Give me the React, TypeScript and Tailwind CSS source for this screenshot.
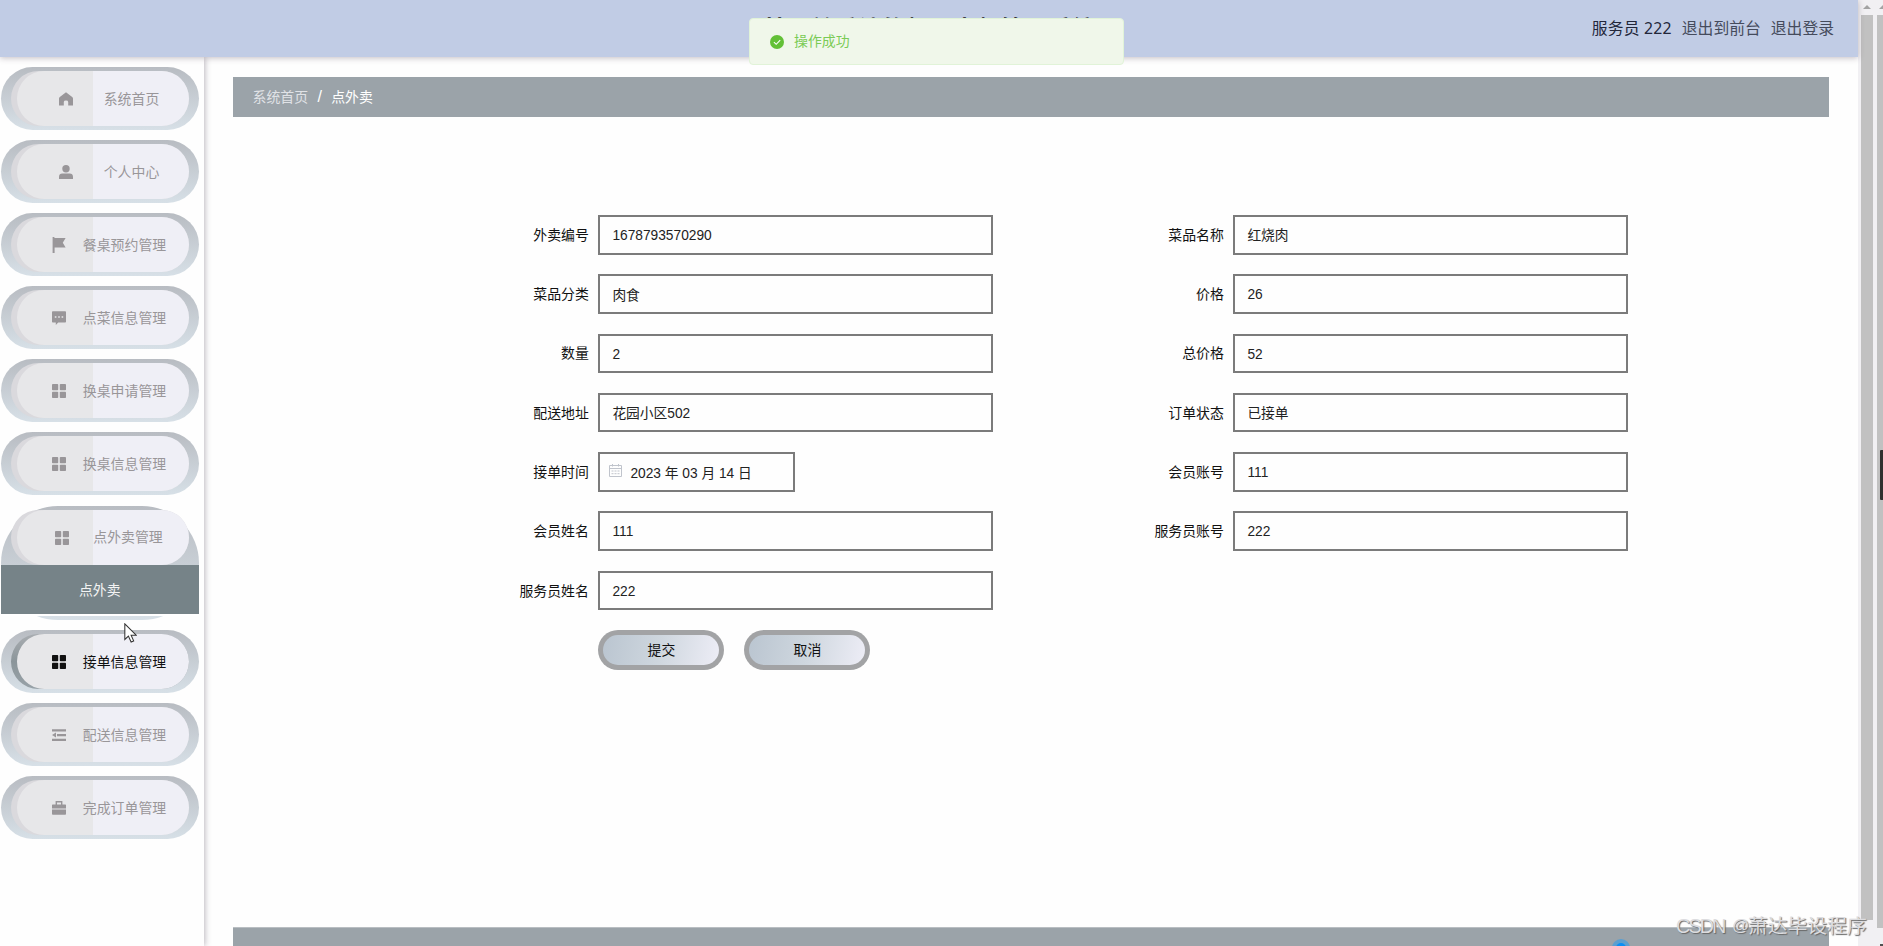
import React from 'react';
import type { ReactNode } from 'react';

interface MenuItem {
  label: string;
  icon: ReactNode;
  gap: string;
  active?: boolean;
  child?: string;
}

interface Field {
  label: string;
  value: string;
  date?: boolean;
}

const Icon: React.FC<{ children: ReactNode }> = ({ children }) => (
  <svg viewBox="0 0 14 14" className="w-[14px] h-[14px] shrink-0" fill="currentColor">{children}</svg>
);

const GridIcon = () => (
  <Icon>
    <rect x="0" y="0" width="6.2" height="6.2" rx="0.8" />
    <rect x="7.8" y="0" width="6.2" height="6.2" rx="0.8" />
    <rect x="0" y="7.8" width="6.2" height="6.2" rx="0.8" />
    <rect x="7.8" y="7.8" width="6.2" height="6.2" rx="0.8" />
  </Icon>
);

const HomeIcon = () => (
  <Icon><path d="M7 0.3 L13.2 5 Q14 5.6 14 6.6 V13.6 H9.2 V10 Q9.2 8.6 7 8.6 Q4.8 8.6 4.8 10 V13.6 H0 V6.6 Q0 5.6 0.8 5 Z" /></Icon>
);

const UserIcon = () => (
  <Icon>
    <circle cx="7" cy="3.7" r="3.7" />
    <path d="M0 14 V12 Q0 8.6 3.4 8.6 H10.6 Q14 8.6 14 12 V14 Z" />
  </Icon>
);

const FlagIcon = () => (
  <svg viewBox="0 0 14 16" className="w-[14px] h-[16px] shrink-0" fill="currentColor">
    <path d="M0.6 0 H2.4 V1 H13.6 L10.8 5.7 L13.6 10.4 H2.6 V16 H0.6 Z" />
  </svg>
);

const ChatIcon = () => (
  <Icon>
    <path
      fillRule="evenodd"
      d="M0.8 0.2 H13.2 Q14 0.2 14 1 V10.8 Q14 11.6 13.2 11.6 H6.2 L3.8 14 V11.6 H0.8 Q0 11.6 0 10.8 V1 Q0 0.2 0.8 0.2 Z M2.8 5.2 V6.8 H4.4 V5.2 Z M6.2 5.2 V6.8 H7.8 V5.2 Z M9.6 5.2 V6.8 H11.2 V5.2 Z"
    />
  </Icon>
);

const FoldIcon = () => (
  <Icon><path d="M0 1.2 H14 V3.4 H0 Z M5 6 H14 V8.2 H5 Z M0 10.8 H14 V13 H0 Z M0 7.1 L4 4.6 V9.6 Z" /></Icon>
);

const CaseIcon = () => (
  <Icon>
    <path d="M3.6 3.6 V0 H10.4 V3.6 H13.4 Q14 3.6 14 4.2 V7.4 H0 V4.2 Q0 3.6 0.6 3.6 Z M5 1.4 V3.6 H9 V1.4 Z" fillRule="evenodd" />
    <path d="M0 8.6 H14 V13 Q14 13.8 13.2 13.8 H0.8 Q0 13.8 0 13 Z" />
  </Icon>
);

const menu: MenuItem[] = [
  { label: '系统首页', icon: <HomeIcon />, gap: 'gap-[31px]' },
  { label: '个人中心', icon: <UserIcon />, gap: 'gap-[31px]' },
  { label: '餐桌预约管理', icon: <FlagIcon />, gap: 'gap-[17px]' },
  { label: '点菜信息管理', icon: <ChatIcon />, gap: 'gap-[17px]' },
  { label: '换桌申请管理', icon: <GridIcon />, gap: 'gap-[17px]' },
  { label: '换桌信息管理', icon: <GridIcon />, gap: 'gap-[17px]' },
  { label: '点外卖管理', icon: <GridIcon />, gap: 'gap-[24px]', child: '点外卖' },
  { label: '接单信息管理', icon: <GridIcon />, gap: 'gap-[17px]', active: true },
  { label: '配送信息管理', icon: <FoldIcon />, gap: 'gap-[17px]' },
  { label: '完成订单管理', icon: <CaseIcon />, gap: 'gap-[17px]' },
];

const leftFields: Field[] = [
  { label: '外卖编号', value: '1678793570290' },
  { label: '菜品分类', value: '肉食' },
  { label: '数量', value: '2' },
  { label: '配送地址', value: '花园小区502' },
  { label: '接单时间', value: '2023 年 03 月 14 日', date: true },
  { label: '会员姓名', value: '111' },
  { label: '服务员姓名', value: '222' },
];

const rightFields: Field[] = [
  { label: '菜品名称', value: '红烧肉' },
  { label: '价格', value: '26' },
  { label: '总价格', value: '52' },
  { label: '订单状态', value: '已接单' },
  { label: '会员账号', value: '111' },
  { label: '服务员账号', value: '222' },
];

const SidebarItem: React.FC<{ item: MenuItem }> = ({ item }) => (
  <li
    className={`w-[197.5px] mb-[10.1px] pt-[4px] bg-linear-to-b from-[#b8bcc2] to-[#d7e0e7] ${
      item.child ? 'h-[114.5px] rounded-[57px]' : 'h-[63px] rounded-[32px]'
    }`}
  >
    <div
      className={`ml-[10px] w-[177.5px] h-[55px] pl-[6px] rounded-[28px] ${
        item.active ? 'bg-linear-to-b from-[#a9adb1] via-[#8b959a] to-[#98a2a8]' : 'bg-[#dad9dd]'
      }`}
    >
      <div
        className={`h-full pl-[12.5px] pt-px rounded-[28px] flex items-center justify-center text-[13.9px] whitespace-nowrap bg-[linear-gradient(90deg,#e7e7e9_76px,#efeff6_76px)] ${item.gap} ${
          item.active ? 'text-[#111]' : 'text-[#999699]'
        }`}
      >
        {item.icon}
        <span>{item.label}</span>
      </div>
    </div>
    {item.child && (
      <div className="bg-white h-[51.5px] w-full">
        <div className="h-[49.5px] pt-[2px] bg-[#768388] text-[#f3f3f3] text-[13.9px] flex items-center justify-center">{item.child}</div>
      </div>
    )}
  </li>
);

const FormRow: React.FC<{ field: Field }> = ({ field }) => (
  <div className="flex items-center h-[39.5px] mb-[19.8px] text-[13.9px] text-[#111]">
    <label className="w-[100px] pr-[9.5px] pt-px text-right">{field.label}</label>
    <div
      className={`h-full border-2 border-[#7b7b7b] flex items-center text-[13.74px] text-[#222] ${
        field.date ? 'w-[197px] pl-[9px] gap-[8px]' : 'w-[395px] pl-[12px]'
      }`}
    >
      {field.date && (
        <svg viewBox="0 0 13 13" className="w-[13px] h-[13px] -mt-[3px]" fill="none" stroke="#c0c4cc" strokeWidth="1">
          <path d="M0.5 1.5 H12.5 V12.5 H0.5 Z M0.5 4.5 H12.5 M3.5 0 V2.5 M9.5 0 V2.5" />
          <path d="M2.5 7 H10.5 M2.5 9.7 H10.5" strokeDasharray="2 1" />
        </svg>
      )}
      <span className={/[^\d]/.test(field.value) ? 'pt-[4px]' : 'pt-[3px]'}>{field.value}</span>
    </div>
  </div>
);

const FormButton: React.FC<{ text: string }> = ({ text }) => (
  <button className="w-[126px] h-[39.5px] rounded-[20px] bg-[#a2a3a5] p-[5px] text-[13.9px] text-[#111]">
    <span className="flex h-full items-center justify-center pt-px rounded-[16px] bg-linear-[100deg] from-[#bac5d0] via-[#cfd7df] to-[#ededf6]">
      {text}
    </span>
  </button>
);

const App: React.FC = () => {
  return (
    <div className="relative flex w-[1883px] h-[946px] overflow-hidden bg-[#fefefe] font-['Liberation_Sans','Noto_Sans_CJK_SC',sans-serif]">
      <div className="w-[1858px] h-full flex flex-col">
        <header className="relative z-10 h-[57px] shrink-0 bg-[#c1cce5] shadow-[0_1px_6px_rgba(60,40,60,0.3)] flex items-center">
          <h1 className="flex-1 pl-[466px] pt-[2px] text-center text-[23.8px] font-bold text-[#222] whitespace-nowrap">
            基于前后端的餐厅点餐管理系统
          </h1>
          <div className="w-[466px] flex justify-end gap-[10px] pr-[24px] text-[15.8px] text-[#454b5c]">
            <span className="text-[#22263a] font-['Noto_Sans','Noto_Sans_CJK_SC',sans-serif] tracking-[0.2px]">服务员 222</span>
            <span>退出到前台</span>
            <span>退出登录</span>
          </div>
        </header>

        <div className="flex flex-1 min-h-0">
          <aside className="w-[203.5px] shrink-0 pt-[10px] pl-px shadow-[1px_0_6px_rgba(60,50,70,0.35)]">
            <ul>
              {menu.map((item) => (
                <SidebarItem key={item.label} item={item} />
              ))}
            </ul>
          </aside>

          <main className="flex-1 ml-[29.5px] mr-[29px] pt-[20px] flex flex-col">
            <nav className="h-[39.5px] pl-[19.5px] pt-px flex items-center gap-[9.3px] bg-[#9ba3a9] text-[13.9px] text-white">
              <span className="text-[#e0e2e6]">系统首页</span>
              <span className="text-[16px]">/</span>
              <span>点外卖</span>
            </nav>

            <form className="flex-1 pt-[98.5px] pl-[265.4px] flex gap-[140px]" onSubmit={(e) => e.preventDefault()}>
              <div>
                {leftFields.map((f) => (
                  <FormRow key={f.label} field={f} />
                ))}
                <div className="flex gap-[20px] pl-[100px]">
                  <FormButton text="提交" />
                  <FormButton text="取消" />
                </div>
              </div>
              <div>
                {rightFields.map((f) => (
                  <FormRow key={f.label} field={f} />
                ))}
              </div>
            </form>

            <footer className="h-[19.5px] shrink-0 bg-[#9ba3a9] border-t border-[#b9bec2]" />
          </main>
        </div>
      </div>

      {/* page scrollbar and window scrollbar */}
      <div className="w-[17px] h-full bg-[#f1f0f3] pl-[3px] pr-[2px] flex flex-col">
        <div className="h-[15px] pt-[5px] flex justify-center">
          <svg viewBox="0 0 8 4" className="w-[8px] h-[4px]" fill="#a3a3a3"><path d="M4 0 L8 4 H0 Z" /></svg>
        </div>
        <div className="h-[905px] bg-[#c1c1c1]" />
      </div>
      <div className="w-[8px] h-full bg-[#f1f0f3] pl-[2px] flex flex-col">
        <div className="h-[15px] pt-[5px] pl-[2px]">
          <svg viewBox="0 0 8 4" className="w-[8px] h-[4px]" fill="#a3a3a3"><path d="M4 0 L8 4 H0 Z" /></svg>
        </div>
        <div className="h-[913px] bg-[#c1c1c1]" />
        <div className="mt-[16px] ml-[3px] w-[3px] h-[2px] bg-[#505050]" />
      </div>
      <div className="absolute right-0 top-[450px] w-[3px] h-[50px] rounded-l-[1px] bg-[#30312f]" />

      {/* success message */}
      <div className="absolute z-20 left-[748.5px] top-[18px] w-[375.5px] h-[47px] pl-[20px] flex items-center gap-[10.5px] rounded-[4px] border border-[#e1f3d8] bg-[#f0f7ea] text-[13.9px] text-[#7acb55]">
        <svg viewBox="0 0 14 14" className="w-[14px] h-[14px]">
          <circle cx="7" cy="7" r="7" fill="#62c036" />
          <path d="M3.9 7.2 L6.2 9.3 L10.2 5.2" fill="none" stroke="#fff" strokeWidth="1.1" />
        </svg>
        <span>操作成功</span>
      </div>

      <div className="absolute left-[1612px] top-[939px] w-[18px] h-[18px] rounded-full bg-[#5b9fd0] p-[4px]">
        <div className="w-full h-full rounded-full bg-[#0a8ff5]" />
      </div>

      <div className="absolute z-20 left-[1676px] top-[911px] flex text-[19.8px] leading-[30px] whitespace-nowrap text-[#dcdcdf] [text-shadow:1px_1px_1px_#666]">
        <span className="w-[56px] tracking-[-1.9px]">CSDN</span>
        <span className="w-[16px] text-[17px]">@</span>
        <span>萧达毕设程序</span>
      </div>

      <svg viewBox="0 0 12 19" className="absolute z-20 left-[124px] top-[623px] w-[13px] h-[20px]" fill="#fff" stroke="#333" strokeWidth="1">
        <path d="M0.6 0.8 V15.6 L4 12.4 L6.6 18 L9 17 L6.6 11.6 H11.4 Z" />
      </svg>
    </div>
  );
};

export default App;
